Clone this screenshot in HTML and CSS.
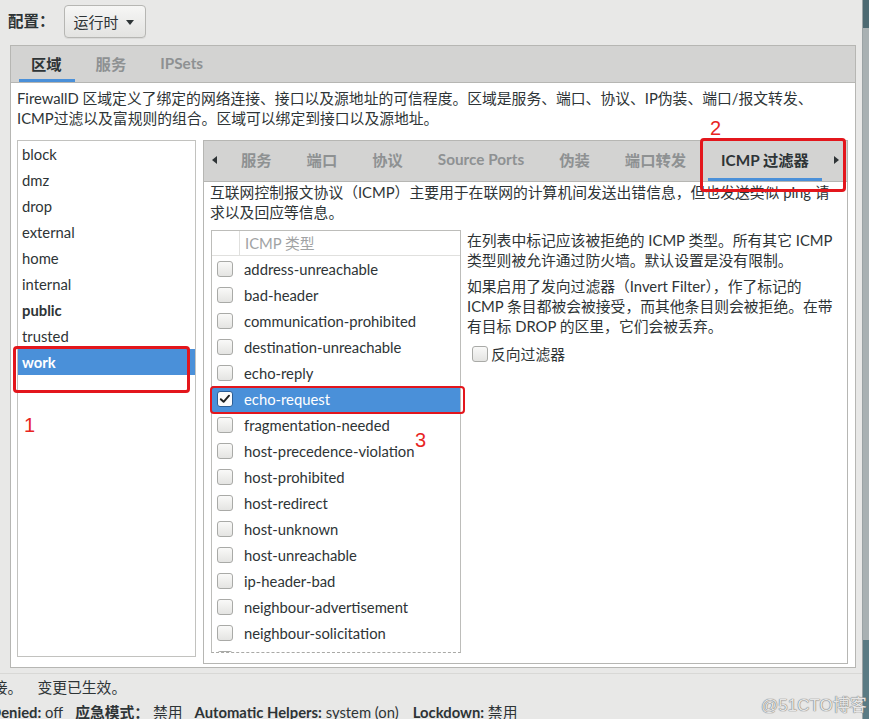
FILE: index.html
```html
<!DOCTYPE html>
<html lang="zh-CN">
<head>
<meta charset="utf-8">
<title>防火墙配置</title>
<link rel="stylesheet" href="styles.css">
</head>
<body>
<div class="window">
  <div class="main">
    <div class="toolbar">
      <span class="cfg-label">配置：</span>
      <div class="combo"><span>运行时</span><span class="caret"></span></div>
    </div>

    <div class="notebook outer">
      <div class="tabbar outer-tabs">
        <div class="tab active">区域</div>
        <div class="tab">服务</div>
        <div class="tab">IPSets</div>
      </div>
      <div class="page outer-page">
        <p class="desc">FirewallD 区域定义了绑定的网络连接、接口以及源地址的可信程度。区域是服务、端口、协议、IP伪装、端口/报文转发、<br>ICMP过滤以及富规则的组合。区域可以绑定到接口以及源地址。</p>
        <div class="panes">
          <ul class="zone-list">
            <li>block</li>
            <li>dmz</li>
            <li>drop</li>
            <li>external</li>
            <li>home</li>
            <li>internal</li>
            <li class="default">public</li>
            <li>trusted</li>
            <li class="selected">work</li>
          </ul>

          <div class="notebook inner">
            <div class="tabbar inner-tabs">
              <span class="arrow left"></span>
              <div class="tabs-scroll">
                <div class="tab">服务</div>
                <div class="tab">端口</div>
                <div class="tab">协议</div>
                <div class="tab">Source Ports</div>
                <div class="tab">伪装</div>
                <div class="tab">端口转发</div>
                <div class="tab active">ICMP 过滤器</div>
              </div>
              <span class="arrow right"></span>
            </div>
            <div class="page inner-page">
              <p class="desc">互联网控制报文协议（ICMP）主要用于在联网的计算机间发送出错信息，但也发送类似 ping 请<br>求以及回应等信息。</p>
              <div class="icmp-panes">
                <div class="icmp-list">
                  <div class="icmp-head"><span class="col-check"></span><span class="col-name">ICMP 类型</span></div>
                  <div class="icmp-rows">
                    <div class="row"><span class="cb"></span>address-unreachable</div>
                    <div class="row"><span class="cb"></span>bad-header</div>
                    <div class="row"><span class="cb"></span>communication-prohibited</div>
                    <div class="row"><span class="cb"></span>destination-unreachable</div>
                    <div class="row"><span class="cb"></span>echo-reply</div>
                    <div class="row selected"><span class="cb checked"><svg viewBox="0 0 16 16" width="14" height="14"><path d="M3.2 8.2 L6.4 11.2 L12.6 4.2" fill="none" stroke="#1d1f20" stroke-width="2.2" stroke-linecap="round" stroke-linejoin="round"/></svg></span>echo-request</div>
                    <div class="row"><span class="cb"></span>fragmentation-needed</div>
                    <div class="row"><span class="cb"></span>host-precedence-violation</div>
                    <div class="row"><span class="cb"></span>host-prohibited</div>
                    <div class="row"><span class="cb"></span>host-redirect</div>
                    <div class="row"><span class="cb"></span>host-unknown</div>
                    <div class="row"><span class="cb"></span>host-unreachable</div>
                    <div class="row"><span class="cb"></span>ip-header-bad</div>
                    <div class="row"><span class="cb"></span>neighbour-advertisement</div>
                    <div class="row"><span class="cb"></span>neighbour-solicitation</div>
                    <div class="row"><span class="cb"></span></div>
                  </div>
                </div>
                <div class="icmp-info">
                  <p>在列表中标记应该被拒绝的 ICMP 类型。所有其它 ICMP<br>类型则被允许通过防火墙。默认设置是没有限制。</p>
                  <p>如果启用了发向过滤器（Invert Filter），作了标记的<br>ICMP 条目都被会被接受，而其他条目则会被拒绝。在带<br>有目标 DROP 的区里，它们会被丢弃。</p>
                  <label class="invert"><span class="cb"></span>反向过滤器</label>
                </div>
              </div>
            </div>
          </div>
        </div>
      </div>
    </div>

    <div class="status">
      <div class="status-line"><span class="lead1">连接。</span><span class="gap-ideo">变更已生效。</span></div>
      <div class="status-line"><span class="lead2"><b>Denied:</b> off</span><span class="item"><b>应急模式：</b> 禁用</span><span class="item"><b>Automatic Helpers:</b> system (on)</span><span class="item lock"><b>Lockdown:</b> 禁用</span></div>
    </div>
  </div>
  <div class="strip"></div>

  <div class="mark box1"></div>
  <div class="mark box2"></div>
  <div class="mark box3"></div>
  <span class="num n1">1</span>
  <span class="num n2">2</span>
  <span class="num n3">3</span>
  <span class="watermark">@51CTO博客</span>
</div>
</body>
</html>
```

FILE: styles.css
```css
* { box-sizing: border-box; }

html, body {
  margin: 0;
  padding: 0;
}

body {
  width: 869px;
  height: 719px;
  overflow: hidden;
  background: #e8e8e7;
  font-family: "Lato", "Noto Sans CJK SC", sans-serif;
  font-size: 14.8px;
  color: #2e3436;
}

.window {
  position: relative;
  display: flex;
  width: 869px;
  height: 719px;
}

.main {
  width: 862px;
  height: 719px;
  display: flex;
  flex-direction: column;
  overflow: hidden;
  flex: none;
}

.main > * {
  flex: none;
}

.strip {
  flex: none;
  width: 7px;
  height: 719px;
  border-left: 1px solid #9ba3a5;
  background: linear-gradient(#4d6a72 0, #4d6a72 28px, #a9b1b3 28px, #a9b1b3 640px, #5a7b84 640px);
}

/* toolbar */
.toolbar {
  height: 45px;
  display: flex;
  align-items: flex-start;
  padding: 5px 0 0 8px;
}

.cfg-label {
  font-weight: bold;
  font-size: 15.5px;
  line-height: 33px;
}

.combo {
  margin-left: 9px;
  width: 82px;
  height: 33px;
  border: 1px solid #b6b6b3;
  border-radius: 4px;
  background: linear-gradient(#f6f6f5, #e3e3e1);
  box-shadow: 0 1px 0 rgba(0,0,0,0.06);
  display: flex;
  align-items: center;
  padding-left: 9px;
  gap: 7px;
  line-height: 20px;
  font-size: 15px;
}

.caret {
  width: 0;
  height: 0;
  border-left: 4px solid transparent;
  border-right: 4px solid transparent;
  border-top: 5px solid #2e3436;
  margin-top: 2px;
}

/* notebooks */
.notebook {
  border: 1px solid #b6b6b3;
  display: flex;
  flex-direction: column;
}

.outer {
  margin-left: 10px;
  width: 846px;
  height: 623px;
}

.tabbar {
  display: flex;
  background: #d3d3d2;
  border-bottom: 1px solid #b6b6b3;
  flex: none;
}

.tab {
  font-weight: bold;
  font-size: 15.3px;
  color: #8e9192;
  padding: 0 12px;
  display: flex;
  align-items: center;
  white-space: nowrap;
}

.tab.active {
  color: #2e3436;
  box-shadow: inset 0 -3px 0 #4a90d9;
}

.outer-tabs {
  height: 37px;
  padding-left: 8px;
  gap: 9px;
}

.outer-tabs .tab {
  padding: 0 13px 2px 12px;
}

.page {
  background: #ffffff;
  flex: 1;
  overflow: hidden;
}

.desc {
  margin: 0;
  line-height: 20px;
  white-space: nowrap;
}

.outer-page .desc {
  padding: 5px 6px 0 6px;
}

.panes {
  display: flex;
  gap: 7px;
  padding: 12px 0 0 6px;
}

.zone-list {
  list-style: none;
  margin: 0;
  padding: 0;
  width: 179px;
  height: 517px;
  border: 1px solid #c2c2bf;
  flex: none;
}

.zone-list li {
  height: 26px;
  line-height: 26px;
  padding-left: 4px;
}

.zone-list li.default {
  font-weight: bold;
}

.zone-list li.selected {
  background: #4a90d9;
  color: #ffffff;
  font-weight: bold;
}

.inner {
  width: 645px;
  height: 524px;
  flex: none;
}

.inner-tabs {
  height: 41px;
  align-items: stretch;
}

.arrow {
  flex: none;
  width: 0;
  height: 0;
  align-self: center;
  border-top: 4px solid transparent;
  border-bottom: 4px solid transparent;
  margin-top: -2px;
}

.arrow.left {
  border-right: 5px solid #2e3436;
  margin-left: 8px;
  margin-right: 10px;
}

.arrow.right {
  border-left: 5px solid #2e3436;
  margin-left: 6px;
  margin-right: 8px;
}

.tabs-scroll {
  flex: 1;
  display: flex;
  gap: 9px;
  overflow: hidden;
  padding-left: 1px;
}

.inner-tabs .tab {
  padding: 0 13px 5px;
}

.inner-page .desc {
  padding: 0 6px;
}

/* icmp */
.icmp-panes {
  display: flex;
  padding: 8px 0 0 7px;
  gap: 6px;
}

.icmp-list {
  flex: none;
  width: 250px;
  height: 423px;
  border: 1px solid #bdbdba;
  border-bottom: 1px dashed #a9a9a6;
  overflow: hidden;
}

.icmp-head {
  display: flex;
  height: 25px;
  border-bottom: 1px solid #e0e0de;
}

.col-check {
  width: 28px;
  border-right: 1px solid #e0e0de;
}

.col-name {
  padding-left: 5px;
  line-height: 24px;
  color: #a1a3a4;
}

.row {
  height: 26px;
  display: flex;
  align-items: center;
  padding-left: 5px;
  white-space: nowrap;
}

.row .cb {
  margin-right: 11px;
}

.row.selected {
  background: #4a90d9;
  color: #ffffff;
}

.cb {
  flex: none;
  display: inline-flex;
  align-items: center;
  justify-content: center;
  width: 16px;
  height: 16px;
  border: 1px solid #a9aaa7;
  border-radius: 3px;
  background: linear-gradient(#f9f9f8, #e4e4e2);
}

.cb.checked {
  background: #fbfbfb;
  border-color: #2a5d95;
}

.icmp-info p {
  margin: 0 0 6px;
  line-height: 20px;
  white-space: nowrap;
}

.invert {
  display: flex;
  align-items: center;
  gap: 3px;
  margin: 8px 0 0 5px;
  line-height: 20px;
}

/* status */
.status {
  margin-top: 5px;
  border-top: 1px solid #d8d8d6;
  padding-top: 1px;
  overflow: hidden;
  white-space: nowrap;
}

.status-line {
  height: 25px;
  line-height: 25px;
}

.lead1 {
  display: inline-block;
  margin-left: -22px;
}

.gap-ideo {
  margin-left: 15px;
}

.lead2 {
  display: inline-block;
  margin-left: -10px;
}

.item {
  margin-left: 12px;
}

.item.lock {
  margin-left: 14px;
}

/* annotations (overlays) */
.mark {
  position: absolute;
  border: 3px solid #e3161c;
  border-radius: 4px;
}

.box1 { left: 13px; top: 346px; width: 177px; height: 47px; }
.box2 { left: 700px; top: 138px; width: 146px; height: 54px; }
.box3 { left: 210px; top: 386px; width: 255px; height: 28px; border-width: 2px; }

.num {
  position: absolute;
  font-family: "Liberation Sans", sans-serif;
  font-size: 20px;
  line-height: 20px;
  color: #e8251f;
}

.n1 { left: 24px; top: 415px; }
.n2 { left: 710px; top: 118px; }
.n3 { left: 415px; top: 430px; }

.watermark {
  position: absolute;
  left: 761px;
  top: 691px;
  font-family: "Liberation Sans", "Noto Sans CJK SC", sans-serif;
  font-size: 17px;
  color: #e6e6e6;
  text-shadow: 0 0 1px #6d6d6d, 0 0 1px #6d6d6d;
}
```
